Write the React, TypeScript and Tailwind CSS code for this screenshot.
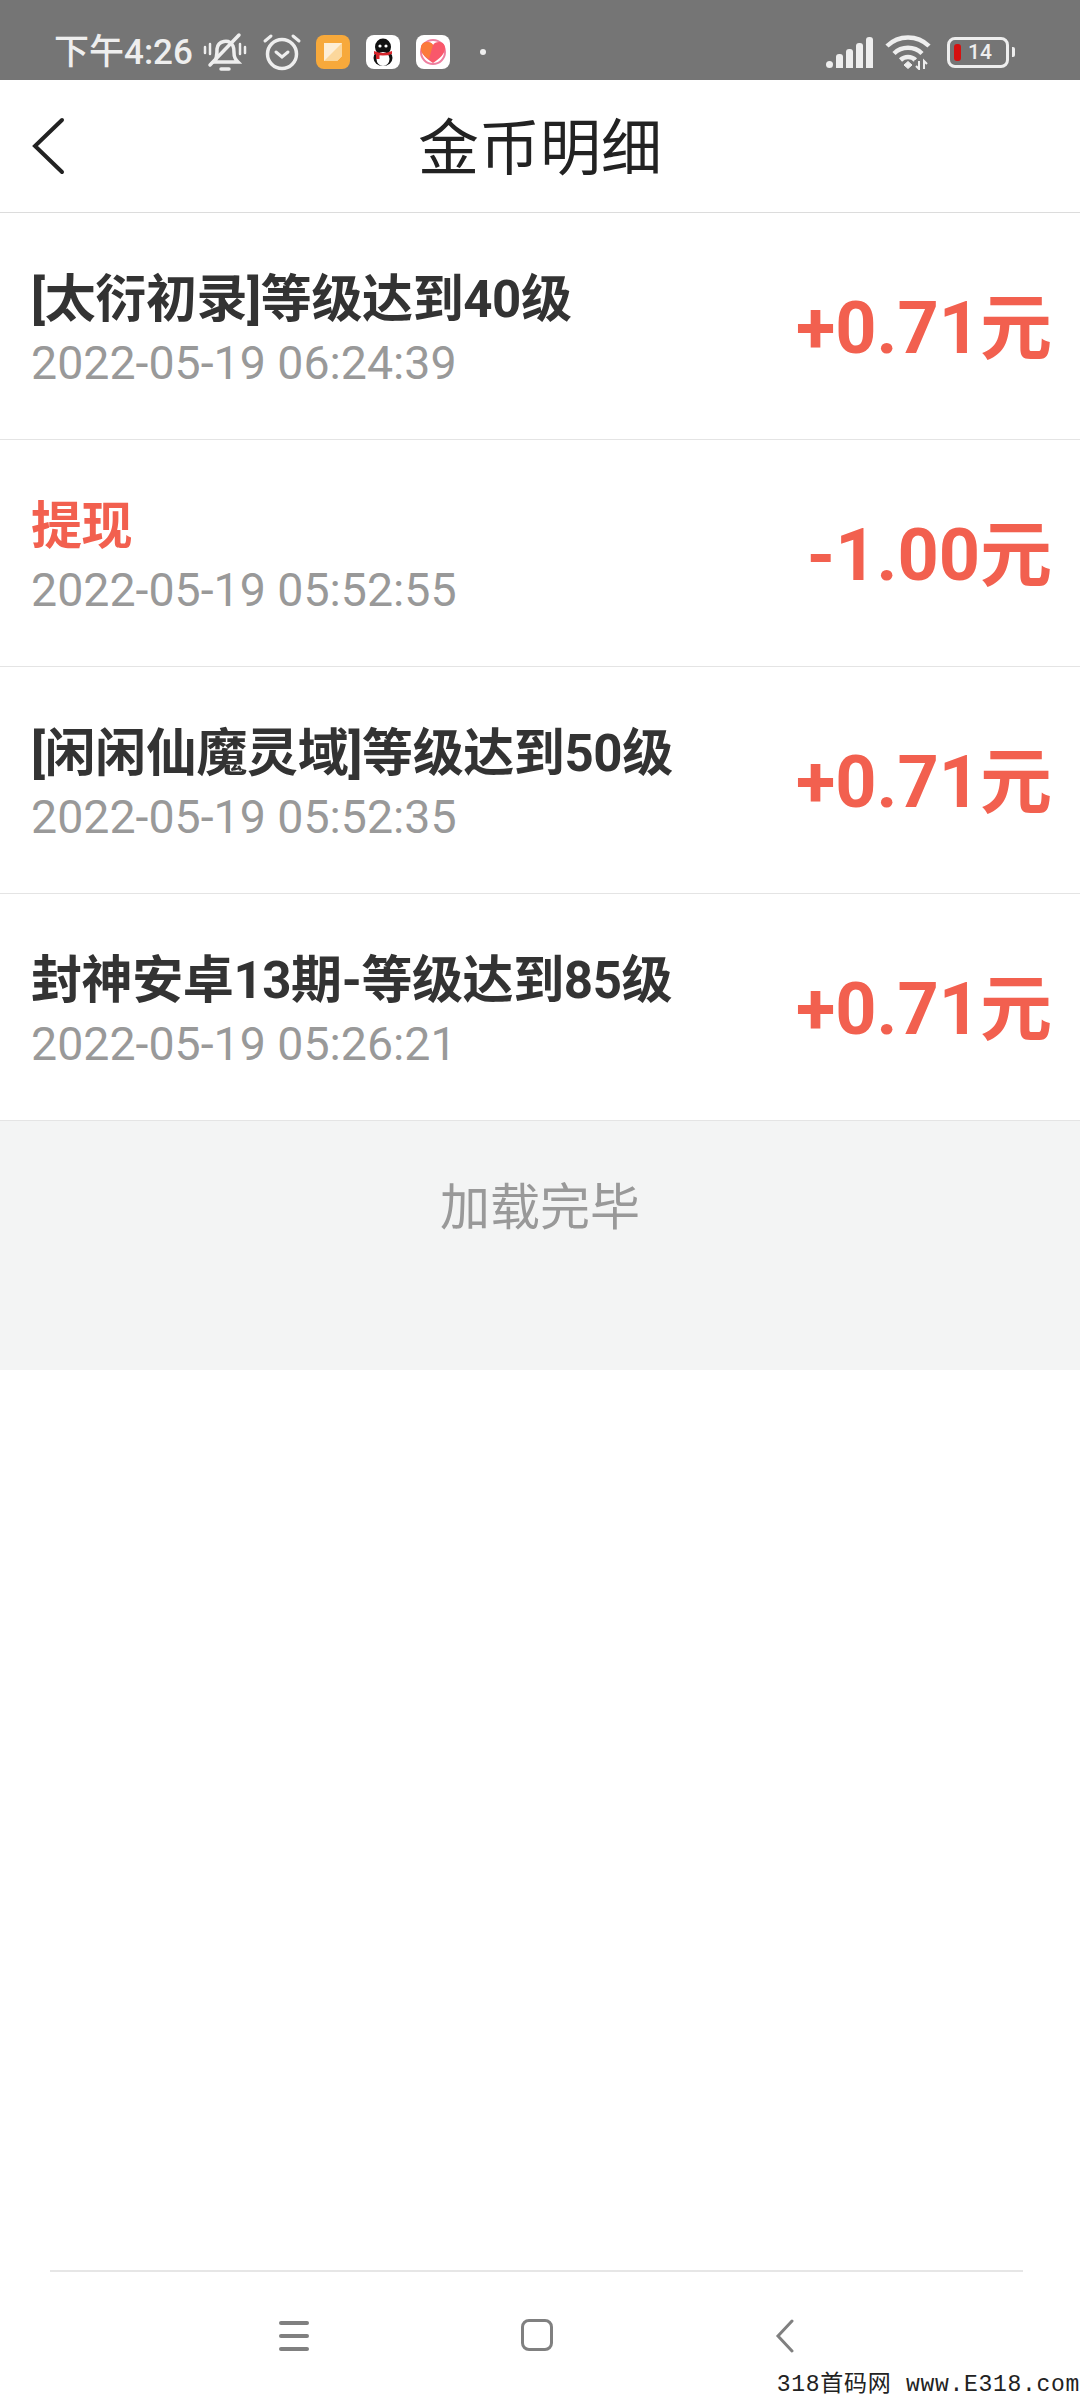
const font = "[font-family:'Roboto','Noto_Sans_CJK_SC',sans-serif]";

const rows = [
  { title: '[太衍初录]等级达到40级', time: '2022-05-19 06:24:39', amount: '+0.71元' },
  { title: '提现', time: '2022-05-19 05:52:55', amount: '-1.00元', red: true },
  { title: '[闲闲仙魔灵域]等级达到50级', time: '2022-05-19 05:52:35', amount: '+0.71元' },
  { title: '封神安卓13期-等级达到85级', time: '2022-05-19 05:26:21', amount: '+0.71元' },
];

function MuteIcon() {
  return (
    <svg width="44" height="40" viewBox="0 0 44 40" fill="none" stroke="#eee" strokeWidth="3.5" strokeLinecap="round">
      <path d="M11 30c3-3 3-7 3-13a8.5 8.5 0 0 1 16-3c2 4 0 9 2 12 1 2 2 3 3 4H11z" />
      <path d="M7 33 36 3" />
      <path d="M2 15v6M7 12v10M37 12v10M42 15v6" strokeWidth="2.5" />
      <path d="M18 37h8" />
    </svg>
  );
}

function AlarmIcon() {
  return (
    <svg width="40" height="38" viewBox="0 0 40 38" fill="none" stroke="#eee" strokeLinecap="round">
      <circle cx="20" cy="21" r="14.5" strokeWidth="3.5" />
      <path d="M14 19l6 5 6-5" strokeWidth="3" />
      <path d="M3 8l6-5M37 8l-6-5" strokeWidth="3" />
    </svg>
  );
}

function NoteIcon() {
  return (
    <svg width="34" height="34" viewBox="0 0 34 34">
      <rect width="34" height="34" rx="8" fill="#f7a93b" />
      <path d="M8 8h18v13l-5 5H8z" fill="#fdeed6" />
      <path d="M8 26 26 8v13l-5 5z" fill="#fbd79c" />
    </svg>
  );
}

function QQIcon() {
  return (
    <svg width="34" height="34" viewBox="0 0 34 34">
      <rect width="34" height="34" rx="8" fill="#fff" />
      <ellipse cx="17" cy="12" rx="8" ry="8.5" fill="#111" />
      <ellipse cx="17" cy="23" rx="9.5" ry="8" fill="#111" />
      <ellipse cx="17" cy="24" rx="6.5" ry="7" fill="#fff" />
      <circle cx="14" cy="11" r="1.6" fill="#fff" />
      <circle cx="20" cy="11" r="1.6" fill="#fff" />
      <path d="M8 16q9 4 18 0v3q-9 3-18 0z" fill="#d7262c" />
      <rect x="10" y="18" width="3.5" height="6" fill="#d7262c" />
    </svg>
  );
}

function HeartIcon() {
  return (
    <svg width="34" height="34" viewBox="0 0 34 34">
      <rect width="34" height="34" rx="8" fill="#fff" />
      <circle cx="17" cy="17" r="12" fill="none" stroke="#ee7fa0" strokeWidth="2" />
      <path d="M17 28C10 23 5 19 5 13c0-4 3-6 6-6 3 0 5 1 6 3 1-2 3-3 6-3 3 0 6 2 6 6 0 6-5 10-12 15z" fill="#f9586b" />
      <path d="M5 13c0-4 3-6 6-6 3 0 5 1 6 3l-4 14C8 21 5 18 5 13z" fill="#fb7a3c" />
    </svg>
  );
}

function SignalIcon() {
  return (
    <div className="flex items-end gap-[3px]">
      <span className="w-[7px] h-[7px] rounded-full bg-[#eee]" />
      <span className="w-[7px] h-[14px] rounded-t-[3px] bg-[#eee]" />
      <span className="w-[7px] h-[19px] rounded-t-[3px] bg-[#eee]" />
      <span className="w-[7px] h-[25px] rounded-t-[3px] bg-[#eee]" />
      <span className="w-[7px] h-[31px] rounded-t-[3px] bg-[#eee]" />
    </div>
  );
}

function WifiIcon() {
  return (
    <svg width="46" height="36" viewBox="0 0 46 36" fill="none" stroke="#eee" strokeWidth="4.5">
      <path d="M2 12a30 30 0 0 1 42 0" />
      <path d="M9 19.5a20 20 0 0 1 28 0" />
      <path d="M15.5 26a11 11 0 0 1 15 0" />
      <path d="M19 31l4-3.5 4 3.5-4 3.5z" fill="#eee" strokeWidth="1" />
      <path d="M33 26v9M39 26v9" stroke="#757575" strokeWidth="7" />
      <path d="M34 27v8l-3-3M39 35v-8l3 3" strokeWidth="2" />
    </svg>
  );
}

function Battery() {
  return (
    <div className="flex items-center gap-[3px]">
      <div className="w-[62px] h-[31px] rounded-[8px] border-[3px] border-[#eee] flex items-center pl-[4px] gap-[7px]">
        <span className="w-[7px] h-[17px] rounded-[3px] bg-[#d6100f]" />
        <span className="text-[21px] leading-none font-medium text-[#eee]">14</span>
      </div>
      <span className="w-[3px] h-[10px] rounded-r-[2px] bg-[#eee]" />
    </div>
  );
}

function StatusBar() {
  return (
    <div className="h-[80px] bg-[#757575] flex items-center pl-[54px] pr-[65px] pt-[24px]">
      <span className="text-[35px] leading-none font-medium text-[#eee]">下午4:26</span>
      <div className="ml-[10px]"><MuteIcon /></div>
      <div className="ml-[15px]"><AlarmIcon /></div>
      <div className="ml-[14px]"><NoteIcon /></div>
      <div className="ml-[16px]"><QQIcon /></div>
      <div className="ml-[16px]"><HeartIcon /></div>
      <span className="ml-[30px] w-[6px] h-[6px] rounded-full bg-[#eee]" />
      <div className="ml-auto flex items-center">
        <SignalIcon />
        <div className="ml-[12px]"><WifiIcon /></div>
        <div className="ml-[16px]"><Battery /></div>
      </div>
    </div>
  );
}

function Header() {
  return (
    <div className="relative h-[133px] border-b border-[#dcdcdc] flex items-center justify-center">
      <svg className="absolute left-[30px] top-[36px]" width="36" height="60" viewBox="0 0 36 60" fill="none" stroke="#222" strokeWidth="4" strokeLinecap="round">
        <path d="M32 4 5 30l27 26" />
      </svg>
      <span className="text-[61px] leading-none text-[#222] pt-[6px]">金币明细</span>
    </div>
  );
}

function Row({ title, time, amount, red }: { title: string; time: string; amount: string; red?: boolean }) {
  return (
    <div className="h-[227px] border-b border-[#e4e4e4] flex items-center justify-between pl-[31px] pr-[28px]">
      <div className="flex flex-col pt-[3px]">
        <span className={`text-[51px] leading-[64px] font-bold tracking-[-0.4px] ${red ? 'text-[#f2604f]' : 'text-[#333]'}`}>{title}</span>
        <span className="text-[46.5px] leading-[50px] mt-[6px] text-[#999]">{time}</span>
      </div>
      <span className="text-[72px] leading-none font-bold text-[#f2604f] pt-[6px]">{amount}</span>
    </div>
  );
}

export default function App() {
  return (
    <div className={`relative w-[1080px] h-[2400px] bg-white overflow-hidden flex flex-col ${font}`}>
      <StatusBar />
      <Header />
      {rows.map((r) => (
        <Row key={r.time} {...r} />
      ))}
      <div className="h-[249px] bg-[#f3f4f4] flex justify-center pt-[62px]">
        <span className="text-[50px] leading-none text-[#999]">加载完毕</span>
      </div>

      <div className="mt-auto ml-[50px] mr-[57px] border-t-2 border-[#e6e6e6] h-[130px] flex items-start pt-[47px] pl-[229px]">
        <div className="flex flex-col gap-[9px] pt-[2px]">
          <span className="w-[30px] h-[4px] rounded-full bg-[#808080]" />
          <span className="w-[30px] h-[4px] rounded-full bg-[#808080]" />
          <span className="w-[30px] h-[4px] rounded-full bg-[#808080]" />
        </div>
        <span className="ml-[212px] w-[32px] h-[32px] rounded-[8px] border-[3px] border-[#808080]" />
        <svg className="ml-[222px]" width="20" height="34" viewBox="0 0 20 34" fill="none" stroke="#808080" strokeWidth="3" strokeLinecap="round">
          <path d="M17 2 3 17l14 15" />
        </svg>
      </div>

      <div className="absolute right-0 bottom-0 text-[23px] leading-[30px] text-[#222] tracking-[0.7px] [font-family:'Liberation_Mono','Noto_Sans_CJK_SC',monospace] whitespace-nowrap">
        318首码网 www.E318.com
      </div>
    </div>
  );
}
